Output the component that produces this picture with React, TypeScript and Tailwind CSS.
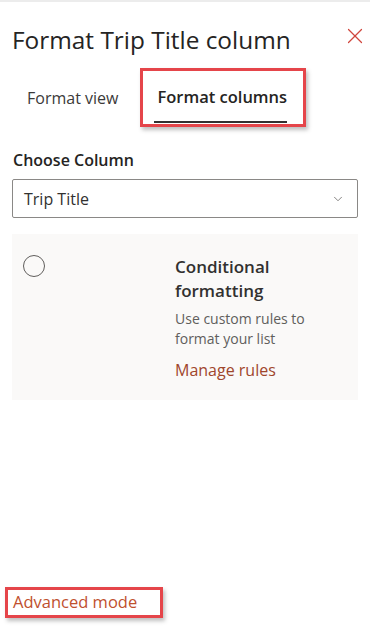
import { ChevronDown, X } from 'lucide-react'

export default function App() {
  return (
    <div
      className="flex h-[627px] w-[370px] flex-col overflow-hidden border-t-2 border-[#ececec] bg-white text-[#323130]"
      style={{ fontFamily: '"Open Sans", "Noto Sans", sans-serif' }}
    >
      {/* header */}
      <div className="flex items-start justify-between pl-[12px] pr-[2px] pt-[22px]">
        <h1 className="text-[24.4px] leading-[32px] font-normal text-[#252423]">
          Format Trip Title column
        </h1>
        <button type="button" aria-label="Close" className="mt-[-1px] text-[#d0463d]">
          <X className="h-[26px] w-[26px]" strokeWidth={1.1} />
        </button>
      </div>

      {/* tabs */}
      <div className="mt-[12px] flex items-center pl-[27px]">
        <span className="text-[16px] text-[#3b3a39]">Format view</span>
        <div className="ml-[22px] flex h-[59px] w-[166px] flex-col justify-center border-[3px] border-[#e5454a] pl-[14px] shadow-[2px_3px_4px_rgba(0,0,0,0.25)]">
          <div className="relative flex h-full flex-col justify-center">
            <span className="text-[16.5px] font-semibold text-[#252423]">Format columns</span>
            <span className="absolute bottom-[1px] left-[-3px] h-[2px] w-[133px] bg-[#323130]" />
          </div>
        </div>
      </div>

      {/* column picker */}
      <div className="mt-[22px] px-[12px]">
        <label className="block pl-px text-[16px] font-semibold leading-[22px] text-[#252423]">
          Choose Column
        </label>
        <div className="mt-[8px] flex h-[39px] items-center justify-between rounded-[2px] border border-[#8a8886] pl-[11px] pr-[12px]">
          <span className="text-[16px] text-[#323130]">Trip Title</span>
          <ChevronDown className="h-[14px] w-[14px] text-[#605e5c]" strokeWidth={1.3} />
        </div>

        {/* conditional formatting card */}
        <div className="mt-[16px] flex h-[166px] bg-[#faf9f8] pt-[21px]">
          <div className="ml-[11px] h-[22px] w-[22px] rounded-full border-[1.5px] border-[#605e5c]" />
          <div className="ml-[130px] flex flex-col">
            <span className="text-[17px] font-semibold leading-[24px] text-[#323130]">
              Conditional
              <br />
              formatting
            </span>
            <span className="mt-[6px] text-[14px] leading-[20px] text-[#605e5c]">
              Use custom rules to
              <br />
              format your list
            </span>
            <span className="mt-[10px] text-[16px] leading-[22px] text-[#a0462c]">Manage rules</span>
          </div>
        </div>
      </div>

      {/* advanced mode */}
      <div className="mt-auto mb-[9px] ml-[5px] flex h-[31px] w-[158px] items-center border-[3px] border-[#e5454a] pl-[5px] shadow-[2px_3px_4px_rgba(0,0,0,0.25)]">
        <span className="text-[16.5px] text-[#c0502e]">Advanced mode</span>
      </div>
    </div>
  )
}
